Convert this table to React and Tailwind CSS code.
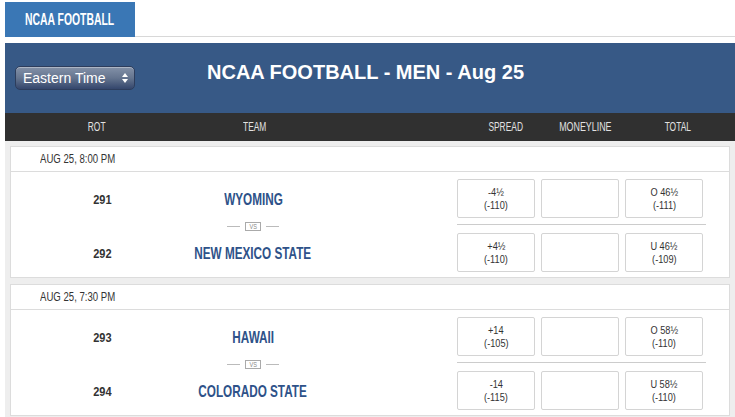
const sans = "font-['Liberation_Sans',Arial,sans-serif]"

const games = [
  {
    date: 'AUG 25, 8:00 PM',
    teams: [
      { rot: 291, name: 'WYOMING', spread: ['-4½', '(-110)'], total: ['O 46½', '(-111)'] },
      { rot: 292, name: 'NEW MEXICO STATE', spread: ['+4½', '(-110)'], total: ['U 46½', '(-109)'] },
    ],
  },
  {
    date: 'AUG 25, 7:30 PM',
    teams: [
      { rot: 293, name: 'HAWAII', spread: ['+14', '(-105)'], total: ['O 58½', '(-110)'] },
      { rot: 294, name: 'COLORADO STATE', spread: ['-14', '(-115)'], total: ['U 58½', '(-110)'] },
    ],
  },
]

// narrow text: the site font is a condensed face, squeeze Liberation Sans
const Narrow = ({ children, className = '' }) => (
  <span className={`inline-block shrink-0 whitespace-nowrap scale-x-[0.7] ${className}`}>{children}</span>
)

const OddsBox = ({ lines }) => (
  <div className={`w-[78px] h-[39px] border border-[#d4d4d4] rounded-[2px] bg-white flex flex-col items-center justify-center text-[11.5px] leading-[13px] text-[#333] ${sans}`}>
    {lines && lines.map((l, i) => <Narrow key={i} className="scale-x-[0.8]">{l}</Narrow>)}
  </div>
)

const Vs = () => (
  <div className="flex items-center justify-center gap-[5px] h-[10px]">
    <div className="w-[13px] h-px bg-[#bbb]" />
    <div className={`border border-[#aaa] text-[#888] text-[8px] leading-[7px] w-[16px] h-[9px] flex items-center justify-center ${sans}`}>
      <Narrow>VS</Narrow>
    </div>
    <div className="w-[13px] h-px bg-[#bbb]" />
  </div>
)

const TeamLine = ({ team }) => (
  <div className="flex h-[24px] items-center">
    <div className={`w-[182px] flex justify-center text-[12.5px] font-bold text-[#333] ${sans}`}>
      <Narrow className="scale-x-[0.88]">{team.rot}</Narrow>
    </div>
    <div className={`w-[120px] flex justify-center text-[17px] font-bold text-[#2e5289] ${sans}`}>
      <Narrow className="scale-x-[0.69]">{team.name}</Narrow>
    </div>
  </div>
)

const Game = ({ game }) => (
  <div className="bg-white border border-[#dcdcdc]">
    <div className={`h-[25px] border-b border-[#dcdcdc] pl-[29px] flex items-center text-[12px] text-[#333] ${sans}`}>
      <Narrow className="origin-left scale-x-[0.8]">{game.date}</Narrow>
    </div>
    <div className="flex h-[105px]">
      <div className="w-[446px] flex flex-col pt-[16px]">
        <TeamLine team={game.teams[0]} />
        <div className="flex mt-[9px]">
          <div className="w-[182px]" />
          <div className="w-[120px]">
            <Vs />
          </div>
        </div>
        <div className="mt-[11px]">
          <TeamLine team={game.teams[1]} />
        </div>
      </div>
      <div className="w-[249px] flex flex-col pt-[7px]">
        <div className="flex gap-[6px]">
          <OddsBox lines={game.teams[0].spread} />
          <OddsBox />
          <OddsBox lines={game.teams[0].total} />
        </div>
        <div className="h-px bg-[#ccc] mt-[6px] mb-[8px]" />
        <div className="flex gap-[6px]">
          <OddsBox lines={game.teams[1].spread} />
          <OddsBox />
          <OddsBox lines={game.teams[1].total} />
        </div>
      </div>
    </div>
  </div>
)

const App = () => {
  return (
    <div className="w-[735px] h-[417px] overflow-hidden bg-white">
      <div className="flex pl-[5px] pt-[2px]">
        <div className={`w-[130px] h-[35px] bg-[#3a77b5] text-white text-[16px] font-bold flex items-center justify-center ${sans}`}>
          <Narrow className="scale-x-[0.65]">NCAA FOOTBALL</Narrow>
        </div>
        <div className="flex-1 border-b border-[#d8d8d8]" />
      </div>
      <div className="ml-[5px] mt-[6px]">
        <div className="h-[70px] bg-[#375986] flex items-start">
          <div className={`ml-[10px] mt-[23px] w-[120px] h-[24px] rounded-[5px] border border-[#2d3d5c] bg-gradient-to-b from-[#8391a8] via-[#65758f] to-[#34466c] flex items-center pl-[7px] pr-[6px] text-[14px] text-white shadow-[inset_0_1px_0_rgba(255,255,255,0.35)] ${sans}`}>
            <span className="flex-1">Eastern Time</span>
            <span className="flex flex-col gap-[2px]">
              <span className="w-0 h-0 border-l-[3px] border-r-[3px] border-b-[4px] border-l-transparent border-r-transparent border-b-white" />
              <span className="w-0 h-0 border-l-[3px] border-r-[3px] border-t-[4px] border-l-transparent border-r-transparent border-t-white" />
            </span>
          </div>
          <div className={`ml-[72px] mt-[14px] font-bold text-[20px] text-white ${sans}`}>
            NCAA FOOTBALL - MEN - Aug 25
          </div>
        </div>
        <div className={`h-[28px] bg-[#303030] flex items-center text-[12px] text-[#e2e2e2] ${sans}`}>
          <div className="w-[184px] flex justify-center"><Narrow>ROT</Narrow></div>
          <div className="w-[132px] flex justify-center"><Narrow>TEAM</Narrow></div>
          <div className="w-[155px]" />
          <div className="w-[60px] flex justify-center"><Narrow>SPREAD</Narrow></div>
          <div className="w-[14px]" />
          <div className="w-[70px] flex justify-center"><Narrow className="scale-x-[0.74]">MONEYLINE</Narrow></div>
          <div className="w-[28px]" />
          <div className="w-[60px] flex justify-center"><Narrow>TOTAL</Narrow></div>
        </div>
        <div className="bg-[#eeeeee] px-[5px] pt-[5px] flex flex-col gap-[6px] h-[300px]">
          {games.map((g, i) => (
            <Game key={i} game={g} />
          ))}
        </div>
      </div>
    </div>
  )
}

export default App
